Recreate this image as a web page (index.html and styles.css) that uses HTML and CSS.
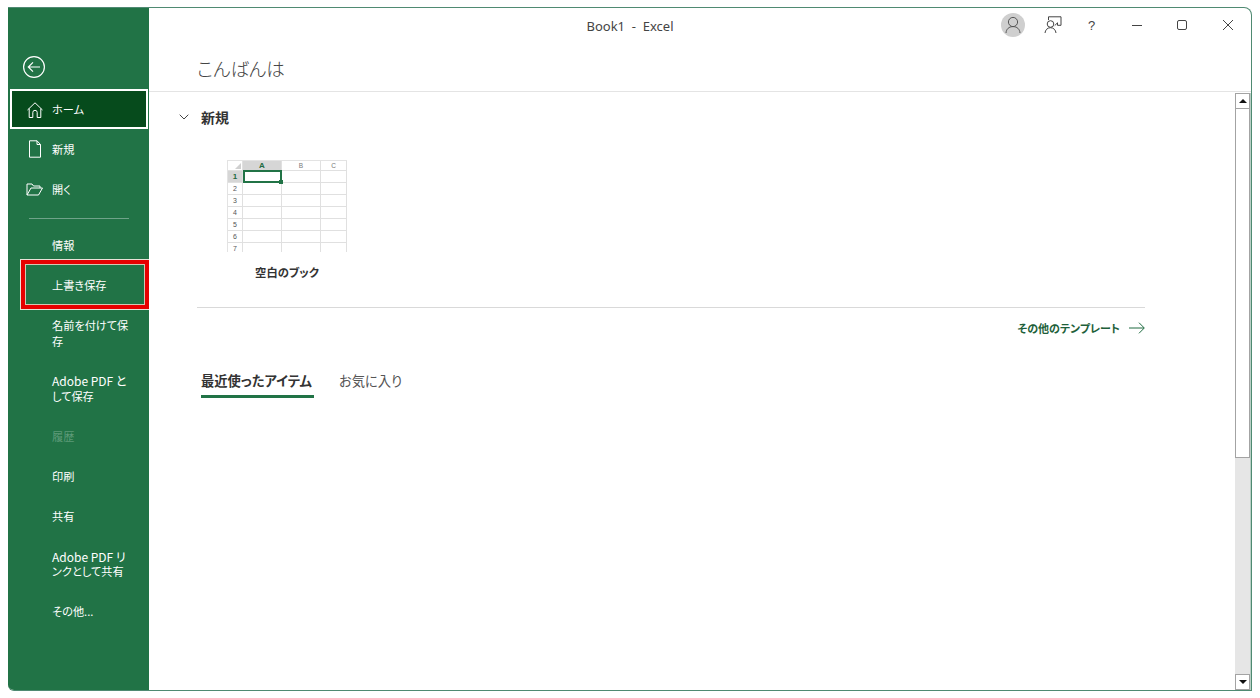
FILE: index.html
```html
<!DOCTYPE html>
<html lang="ja">
<head>
<meta charset="utf-8">
<title>Book1 - Excel</title>
<link rel="stylesheet" href="styles.css">
</head>
<body>
<div class="window">
  <aside class="sidebar">
    <div class="back">
      <svg width="26" height="26" viewBox="0 0 26 26" fill="none" stroke="#fff" stroke-width="1.2"><circle cx="13" cy="13" r="10.4"/><path d="M19 13H7.5M12 8.3 7.3 13l4.7 4.7"/></svg>
    </div>
    <nav class="nav">
      <a class="item active">
        <svg class="icon" width="18" height="18" viewBox="0 0 18 18" fill="none" stroke="#fff" stroke-width="1"><path d="M1.500 9 9 1.800 16.500 9M3.200 7.600v8.900h3.600v-5a2.200 2.200 0 0 1 4.400 0v5h3.600V7.600"/></svg>
        <span>ホーム</span>
      </a>
      <a class="item top">
        <svg class="icon" width="18" height="18" viewBox="0 0 18 18" fill="none" stroke="#fff" stroke-width="1"><path d="M3.500.8h7.500l3.500 3.700v12.700h-11zM11 .8v3.700h3.500"/></svg>
        <span>新規</span>
      </a>
      <a class="item top">
        <svg class="icon" width="18" height="18" viewBox="0 0 18 18" fill="none" stroke="#fff" stroke-width="1"><path d="M1 15V4h5l1.500 2h6.500v2M1 15h11.500L16.500 8H5z"/></svg>
        <span>開く</span>
      </a>
      <div class="rule"></div>
      <a class="item"><span>情報</span></a>
      <a class="item marked"><span>上書き保存</span></a>
      <a class="item tall"><span>名前を付けて保存</span></a>
      <a class="item tall wide"><div><span class="line latin">Adobe PDF と</span><span class="line">して保存</span></div></a>
      <a class="item disabled"><span>履歴</span></a>
      <a class="item"><span>印刷</span></a>
      <a class="item"><span>共有</span></a>
      <a class="item tall"><div><span class="line latin">Adobe PDF リ</span><span class="line">ンクとして共有</span></div></a>
      <a class="item"><span>その他...</span></a>
    </nav>
  </aside>
  <main class="main">
    <header class="titlebar">
      <div class="title">Book1&nbsp; -&nbsp; Excel</div>
      <div class="controls">
        <div class="avatar">
          <svg width="16" height="18" viewBox="0 0 16 18" fill="none" stroke="#555" stroke-width="1"><circle cx="8" cy="6" r="4.600"/><path d="M1 17c.3-4 3-6.400 7-6.400s6.700 2.400 7 6.400"/></svg>
        </div>
        <svg class="ctl-feedback" width="18" height="18" viewBox="0 0 18 18" fill="none" stroke="#444" stroke-width="1"><path d="M4.500 4V.8H17v8.500h-3.500M13.500 9.300v-2.500l-2.800 2.800"/><circle cx="6.500" cy="8" r="3.300"/><path d="M1 17c.3-3 2.300-5.300 5.500-5.300S11.700 14 12 17"/></svg>
        <span class="help">?</span>
        <svg class="ctl-min" width="12" height="12" viewBox="0 0 12 12" stroke="#444" fill="none"><path d="M1 6.500h10"/></svg>
        <svg class="ctl-max" width="12" height="12" viewBox="0 0 12 12" stroke="#444" fill="none"><rect x="1.500" y="1.500" width="9" height="9" rx="1.500"/></svg>
        <svg class="ctl-close" width="12" height="12" viewBox="0 0 12 12" stroke="#444" fill="none"><path d="M1 1l10 10M11 1 1 11"/></svg>
      </div>
    </header>
    <div class="greeting"><h1>こんばんは</h1></div>
    <div class="body">
      <div class="content">
        <div class="section-head">
          <svg width="10" height="6" viewBox="0 0 10 6" fill="none" stroke="#444"><path d="M.7.700 5 5 9.300.700"/></svg>
          <h2>新規</h2>
        </div>
        <div class="template">
          <div class="sheet">
            <div class="sheet-row head"><i class="corner"></i><b class="sel">A</b><b>B</b><b>C</b></div>
            <div class="sheet-row"><i class="rownum sel">1</i><b class="cursor"></b><b></b><b></b></div>
            <div class="sheet-row"><i class="rownum">2</i><b></b><b></b><b></b></div>
            <div class="sheet-row"><i class="rownum">3</i><b></b><b></b><b></b></div>
            <div class="sheet-row"><i class="rownum">4</i><b></b><b></b><b></b></div>
            <div class="sheet-row"><i class="rownum">5</i><b></b><b></b><b></b></div>
            <div class="sheet-row"><i class="rownum">6</i><b></b><b></b><b></b></div>
            <div class="sheet-row"><i class="rownum">7</i><b></b><b></b><b></b></div>
          </div>
          <div class="template-name">空白のブック</div>
        </div>
        <div class="divider"></div>
        <div class="more">
          <span>その他のテンプレート</span>
          <svg width="16" height="12" viewBox="0 0 16 12" fill="none" stroke="#1e6b41"><path d="M0 6h15M10 .7 15.300 6 10 11.300"/></svg>
        </div>
        <div class="tabs">
          <span class="tab on">最近使ったアイテム</span>
          <span class="tab">お気に入り</span>
        </div>
      </div>
      <div class="scrollbar">
        <div class="sb-btn"><i class="up"></i></div>
        <div class="sb-thumb"></div>
        <div class="sb-track"></div>
        <div class="sb-btn"><i class="down"></i></div>
      </div>
    </div>
  </main>
</div>
</body>
</html>
```

FILE: styles.css
```css
* { box-sizing: border-box; }
html, body { margin: 0; height: 100%; background: #fff; overflow: hidden; }
body { padding: 7px 8px; font-family: "Noto Sans CJK JP", "Noto Sans", sans-serif; font-feature-settings: "palt"; color: #333; }
h1, h2 { margin: 0; font-weight: 400; }
.window { display: flex; width: 1244px; height: 684px; border: 1px solid #4f8a72; border-left: 0; border-top-right-radius: 8px; border-bottom-left-radius: 6px; overflow: hidden; background: #fff; }
.sidebar { width: 141px; flex: none; background: #217346; color: #fff; }
.back { height: 81px; padding: 46px 0 0 13px; }
.nav { display: flex; flex-direction: column; }
.item { position: relative; display: flex; align-items: center; gap: 8px; height: 40px; padding: 0 16px 0 44px; font-size: 11.200px; line-height: 15.500px; color: #fff; }
.line { display: block; white-space: nowrap; }
.latin { font-size: 12px; }
.item .icon { margin-left: -26px; flex: none; }
.item.top > span { padding-top: 2px; }
.item.active { margin: 0 1px 0 2px; padding: 1px 16px 0 14px; background: #064b1c; border: 2px solid #fff; }
.item.active .icon { margin-left: 0; }
.item.tall { height: 55px; }
.item.wide { height: 55.500px; }
.item.disabled { color: #5d9a78; }
.item.marked::after { content: ""; position: absolute; left: 12px; top: -7px; right: 0; bottom: -4px; border: 1px solid #e9e2d8; border-right: 0; box-shadow: inset 0 0 0 4px #e60000, inset 0 0 0 5px #d3c6b2; }
.rule { height: 1px; margin: 9px 20px 7px 21px; background: #6fa389; width: 100px; }
.main { flex: 1; min-width: 0; display: flex; flex-direction: column; }
.titlebar { position: relative; height: 35px; flex: none; display: flex; align-items: center; justify-content: center; }
.title { font-size: 13px; color: #444; margin-right: 140px; font-family: "Noto Sans", sans-serif; }
.controls { position: absolute; top: 5px; right: 0; height: 24px; display: flex; align-items: center; }
.avatar { width: 24px; height: 24px; border-radius: 50%; background: #cfcfcf; display: flex; align-items: center; justify-content: center; }
.ctl-feedback { margin-left: 19px; }
.help { margin-left: 26px; width: 10px; font-size: 13px; color: #444; font-family: "Liberation Sans", sans-serif; }
.ctl-min { margin-left: 33px; }
.ctl-max { margin-left: 33px; }
.ctl-close { margin: 0 17px 0 34px; }
.greeting { height: 49px; flex: none; padding: 10px 0 0 48px; border-bottom: 1px solid #e4e4e4; }
.greeting h1 { font-size: 18.500px; font-weight: 300; line-height: 30px; color: #444; }
.body { flex: 1; display: flex; min-height: 0; }
.content { flex: 1; min-width: 0; padding: 0 90px 0 48px; }
.section-head { display: flex; align-items: center; gap: 13px; height: 52px; margin-left: -18px; padding-bottom: 2px; }
.section-head h2 { font-size: 14px; font-weight: 700; color: #333; margin-left: -1px; }
.template { width: 120px; margin: 16px 0 0 30px; }
.sheet { width: 120px; height: 92px; border-top: 1px solid #e3e3e3; border-left: 1px solid #e3e3e3; overflow: hidden; }
.sheet-row { display: flex; height: 12px; }
.sheet-row.head { height: 10px; }
.sheet-row i, .sheet-row b { display: block; font: 400 6.500px/10px "Liberation Sans", sans-serif; text-align: center; color: #777; border-right: 1px solid #e0e0e0; border-bottom: 1px solid #e0e0e0; }
.corner { position: relative; width: 15px; flex: none; }
.corner::after { content: ""; position: absolute; right: 1px; bottom: 1px; border: 3px solid transparent; border-right-color: #d0d0d0; border-bottom-color: #d0d0d0; }
.sheet-row .rownum { width: 15px; flex: none; line-height: 12px; color: #555; font-size: 7px; }
.sheet-row b { width: 39px; flex: none; }
.sheet-row b:last-child { width: 26px; }
.sheet-row .sel { background: #d6d6d6; color: #1e6b41; font-weight: 700; font-size: 8px; }
.sheet-row .cursor { position: relative; border: 2px solid #217346; margin-top: -1px; height: 13px; }
.sheet-row .cursor::after { content: ""; position: absolute; right: -3px; bottom: -3px; width: 4px; height: 4px; background: #217346; }
.template-name { margin-top: 11px; text-align: center; font-size: 11.300px; font-weight: 700; color: #333; line-height: 18px; white-space: nowrap; }
.divider { height: 1px; margin-top: 26px; background: #d9d9d9; }
.more { display: flex; align-items: center; justify-content: flex-end; gap: 9px; height: 40px; font-size: 11px; font-weight: 700; color: #1e5f3a; }
.tabs { display: flex; gap: 25px; margin: 17px 0 0 4px; }
.tab { display: block; height: 36px; padding: 6px 0 0; font-size: 13.300px; line-height: 20px; color: #555; }
.tab.on { font-weight: 700; color: #333; border-bottom: 3px solid #217346; padding: 6px 2px 0 0; height: 33px; }
.scrollbar { width: 16px; flex: none; display: flex; flex-direction: column; margin-top: 1px; background: #e6e6e6; border-right: 1px solid #b8cfc5; }
.sb-btn { height: 16px; flex: none; background: #fff; border: 1px solid #a3a3a3; display: flex; align-items: center; justify-content: center; }
.sb-thumb { height: 349px; flex: none; background: #fff; border: 1px solid #a3a3a3; border-top: 0; }
.sb-track { flex: 1; }
.up { width: 0; height: 0; border: 4px solid transparent; border-top: 0; border-bottom: 4px solid #111; }
.down { width: 0; height: 0; border: 4px solid transparent; border-bottom: 0; border-top: 4px solid #111; }
```
